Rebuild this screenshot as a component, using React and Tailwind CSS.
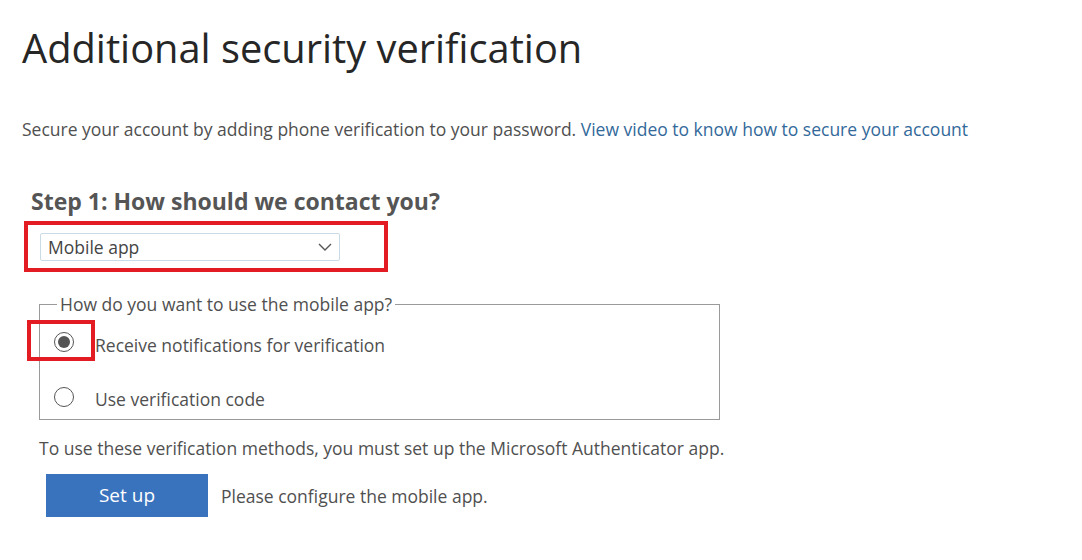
import React from "react";

export default function App() {
  return (
    <div
      className="w-[1082px] h-[560px] bg-white overflow-hidden text-[#505050]"
      style={{ fontFamily: '"Open Sans", "Noto Sans", sans-serif' }}
    >
      <div className="pl-[22px] pt-[22px]">
        <h1 className="text-[39.8px] leading-[52px] text-[#262626] font-normal">
          Additional security verification
        </h1>
        <p className="mt-[44px] text-[17.5px] leading-[22px] text-[#505050]">
          Secure your account by adding phone verification to your password.{" "}
          <span className="text-[#33699a]">View video to know how to secure your account</span>
        </p>
        <h2 className="mt-[47px] ml-[9px] text-[23px] leading-[28px] font-bold text-[#555555]">
          Step 1: How should we contact you?
        </h2>
        <div className="mt-[6px] ml-[2px] w-[364px] h-[51px] border-[4px] border-[#e31b23] pl-[12px] pt-[8px]">
          <div className="w-[300px] h-[28px] border border-[#c9dbe6] rounded-[2px] flex items-center justify-between pl-[7px] pr-[5px]">
            <span className="text-[17.5px] text-[#444444]">Mobile app</span>
            <svg width="18" height="18" viewBox="0 0 18 18">
              <path d="M3 6 L9 12 L15 6" fill="none" stroke="#555" strokeWidth="1.4" />
            </svg>
          </div>
        </div>
        <div className="relative mt-[32px] ml-[17px] w-[681px]">
          <div className="h-[116px] border border-[#9a9a9a] pl-[14px] pt-[22px]">
            <div className="flex items-center h-[30px]">
              <span className="w-[20px] h-[20px] rounded-full border border-[#555] flex items-center justify-center">
                <span className="w-[12px] h-[12px] rounded-full bg-[#555]"></span>
              </span>
              <span className="ml-[21px] mt-[7px] text-[17.5px] text-[#505050]">Receive notifications for verification</span>
            </div>
            <div className="flex items-center h-[30px] mt-[25px]">
              <span className="w-[20px] h-[20px] rounded-full border border-[#555]"></span>
              <span className="ml-[21px] mt-[4px] text-[17.5px] text-[#505050]">Use verification code</span>
            </div>
          </div>
          <span className="absolute left-[18px] top-[-11px] bg-white px-[3px] text-[17.5px] leading-[22px] text-[#505050]">
            How do you want to use the mobile app?
          </span>
          <div className="absolute left-[-12px] top-[16px] w-[68px] h-[41px] border-[4px] border-[#e31b23]"></div>
        </div>
        <p className="mt-[17px] ml-[17px] text-[17.5px] leading-[22px] text-[#505050]">
          To use these verification methods, you must set up the Microsoft Authenticator app.
        </p>
        <div className="mt-[15px] ml-[24px] flex items-center">
          <button className="w-[162px] h-[43px] bg-[#3a73bd] text-white text-[19px]">Set up</button>
          <span className="ml-[13px] mt-[2px] text-[17.5px] text-[#505050]">Please configure the mobile app.</span>
        </div>
      </div>
    </div>
  );
}
